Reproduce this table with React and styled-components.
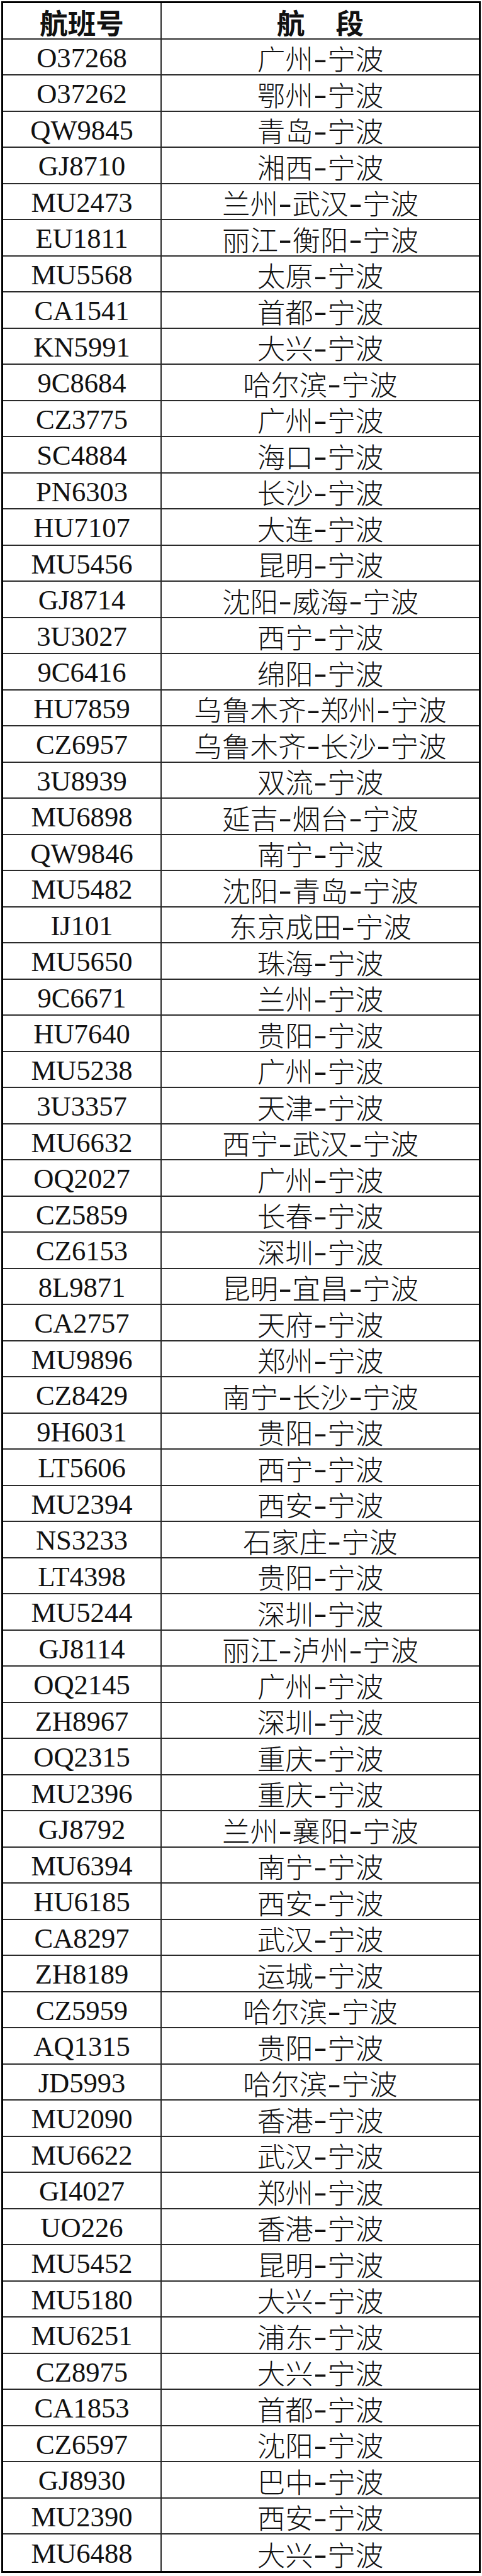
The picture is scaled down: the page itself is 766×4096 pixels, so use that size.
import React from "react";
import styled, { createGlobalStyle } from "styled-components";

const flights = [
  ["O37268", "广州-宁波"],
  ["O37262", "鄂州-宁波"],
  ["QW9845", "青岛-宁波"],
  ["GJ8710", "湘西-宁波"],
  ["MU2473", "兰州-武汉-宁波"],
  ["EU1811", "丽江-衡阳-宁波"],
  ["MU5568", "太原-宁波"],
  ["CA1541", "首都-宁波"],
  ["KN5991", "大兴-宁波"],
  ["9C8684", "哈尔滨-宁波"],
  ["CZ3775", "广州-宁波"],
  ["SC4884", "海口-宁波"],
  ["PN6303", "长沙-宁波"],
  ["HU7107", "大连-宁波"],
  ["MU5456", "昆明-宁波"],
  ["GJ8714", "沈阳-威海-宁波"],
  ["3U3027", "西宁-宁波"],
  ["9C6416", "绵阳-宁波"],
  ["HU7859", "乌鲁木齐-郑州-宁波"],
  ["CZ6957", "乌鲁木齐-长沙-宁波"],
  ["3U8939", "双流-宁波"],
  ["MU6898", "延吉-烟台-宁波"],
  ["QW9846", "南宁-宁波"],
  ["MU5482", "沈阳-青岛-宁波"],
  ["IJ101", "东京成田-宁波"],
  ["MU5650", "珠海-宁波"],
  ["9C6671", "兰州-宁波"],
  ["HU7640", "贵阳-宁波"],
  ["MU5238", "广州-宁波"],
  ["3U3357", "天津-宁波"],
  ["MU6632", "西宁-武汉-宁波"],
  ["OQ2027", "广州-宁波"],
  ["CZ5859", "长春-宁波"],
  ["CZ6153", "深圳-宁波"],
  ["8L9871", "昆明-宜昌-宁波"],
  ["CA2757", "天府-宁波"],
  ["MU9896", "郑州-宁波"],
  ["CZ8429", "南宁-长沙-宁波"],
  ["9H6031", "贵阳-宁波"],
  ["LT5606", "西宁-宁波"],
  ["MU2394", "西安-宁波"],
  ["NS3233", "石家庄-宁波"],
  ["LT4398", "贵阳-宁波"],
  ["MU5244", "深圳-宁波"],
  ["GJ8114", "丽江-泸州-宁波"],
  ["OQ2145", "广州-宁波"],
  ["ZH8967", "深圳-宁波"],
  ["OQ2315", "重庆-宁波"],
  ["MU2396", "重庆-宁波"],
  ["GJ8792", "兰州-襄阳-宁波"],
  ["MU6394", "南宁-宁波"],
  ["HU6185", "西安-宁波"],
  ["CA8297", "武汉-宁波"],
  ["ZH8189", "运城-宁波"],
  ["CZ5959", "哈尔滨-宁波"],
  ["AQ1315", "贵阳-宁波"],
  ["JD5993", "哈尔滨-宁波"],
  ["MU2090", "香港-宁波"],
  ["MU6622", "武汉-宁波"],
  ["GI4027", "郑州-宁波"],
  ["UO226", "香港-宁波"],
  ["MU5452", "昆明-宁波"],
  ["MU5180", "大兴-宁波"],
  ["MU6251", "浦东-宁波"],
  ["CZ8975", "大兴-宁波"],
  ["CA1853", "首都-宁波"],
  ["CZ6597", "沈阳-宁波"],
  ["GJ8930", "巴中-宁波"],
  ["MU2390", "西安-宁波"],
  ["MU6488", "大兴-宁波"],
];

const GlobalStyle = createGlobalStyle`
  body {
    margin: 0;
    background: #fff;
  }
`;

const Page = styled.div`
  padding: 2px 2px 0 2px;
`;

const Table = styled.div`
  display: grid;
  grid-template-columns: 252px 1fr;
  border: 3px solid #000;
  width: 762px;
  box-sizing: border-box;
`;

const Cell = styled.div`
  height: 57.5px;
  box-sizing: border-box;
  display: flex;
  align-items: center;
  justify-content: center;
  border-bottom: ${p => (p.last ? "none" : "2px solid #2a2a2a")};
  border-right: ${p => (p.left ? "2px solid #2a2a2a" : "none")};
  font-family: "Liberation Serif", "Noto Sans CJK SC", serif;
  font-size: 44.6px;
  font-weight: ${p => (p.head ? 700 : 400)};
  color: #111;
  white-space: pre;
  padding-top: 3px;
`;

const Place = styled.span`
  font-family: "Noto Sans CJK SC", sans-serif;
  font-weight: ${p => (p.bold ? 700 : 300)};
`;

const Dash = styled.span`
  display: inline-block;
  width: 0.5em;
  text-align: center;
  font-family: "Liberation Sans", sans-serif;
  font-weight: 300;
  transform: scaleX(1.5) translateY(2px);
`;

const Gap = styled.span`
  display: inline-block;
  width: 1.1em;
`;

function Route({ text }) {
  const parts = text.split("-");
  return (
    <>
      {parts.map((p, i) => (
        <React.Fragment key={i}>
          {i > 0 && <Dash>-</Dash>}
          <Place>{p}</Place>
        </React.Fragment>
      ))}
    </>
  );
}

export default function App() {
  return (
    <>
      <GlobalStyle />
      <Page>
        <Table>
          <Cell left head>
            <Place bold>航班号</Place>
          </Cell>
          <Cell head>
            <Place bold>航</Place>
            <Gap />
            <Place bold>段</Place>
          </Cell>
          {flights.map(([no, route], i) => {
            const last = i === flights.length - 1;
            return (
              <React.Fragment key={no + i}>
                <Cell left last={last}>{no}</Cell>
                <Cell last={last}>
                  <Route text={route} />
                </Cell>
              </React.Fragment>
            );
          })}
        </Table>
      </Page>
    </>
  );
}
